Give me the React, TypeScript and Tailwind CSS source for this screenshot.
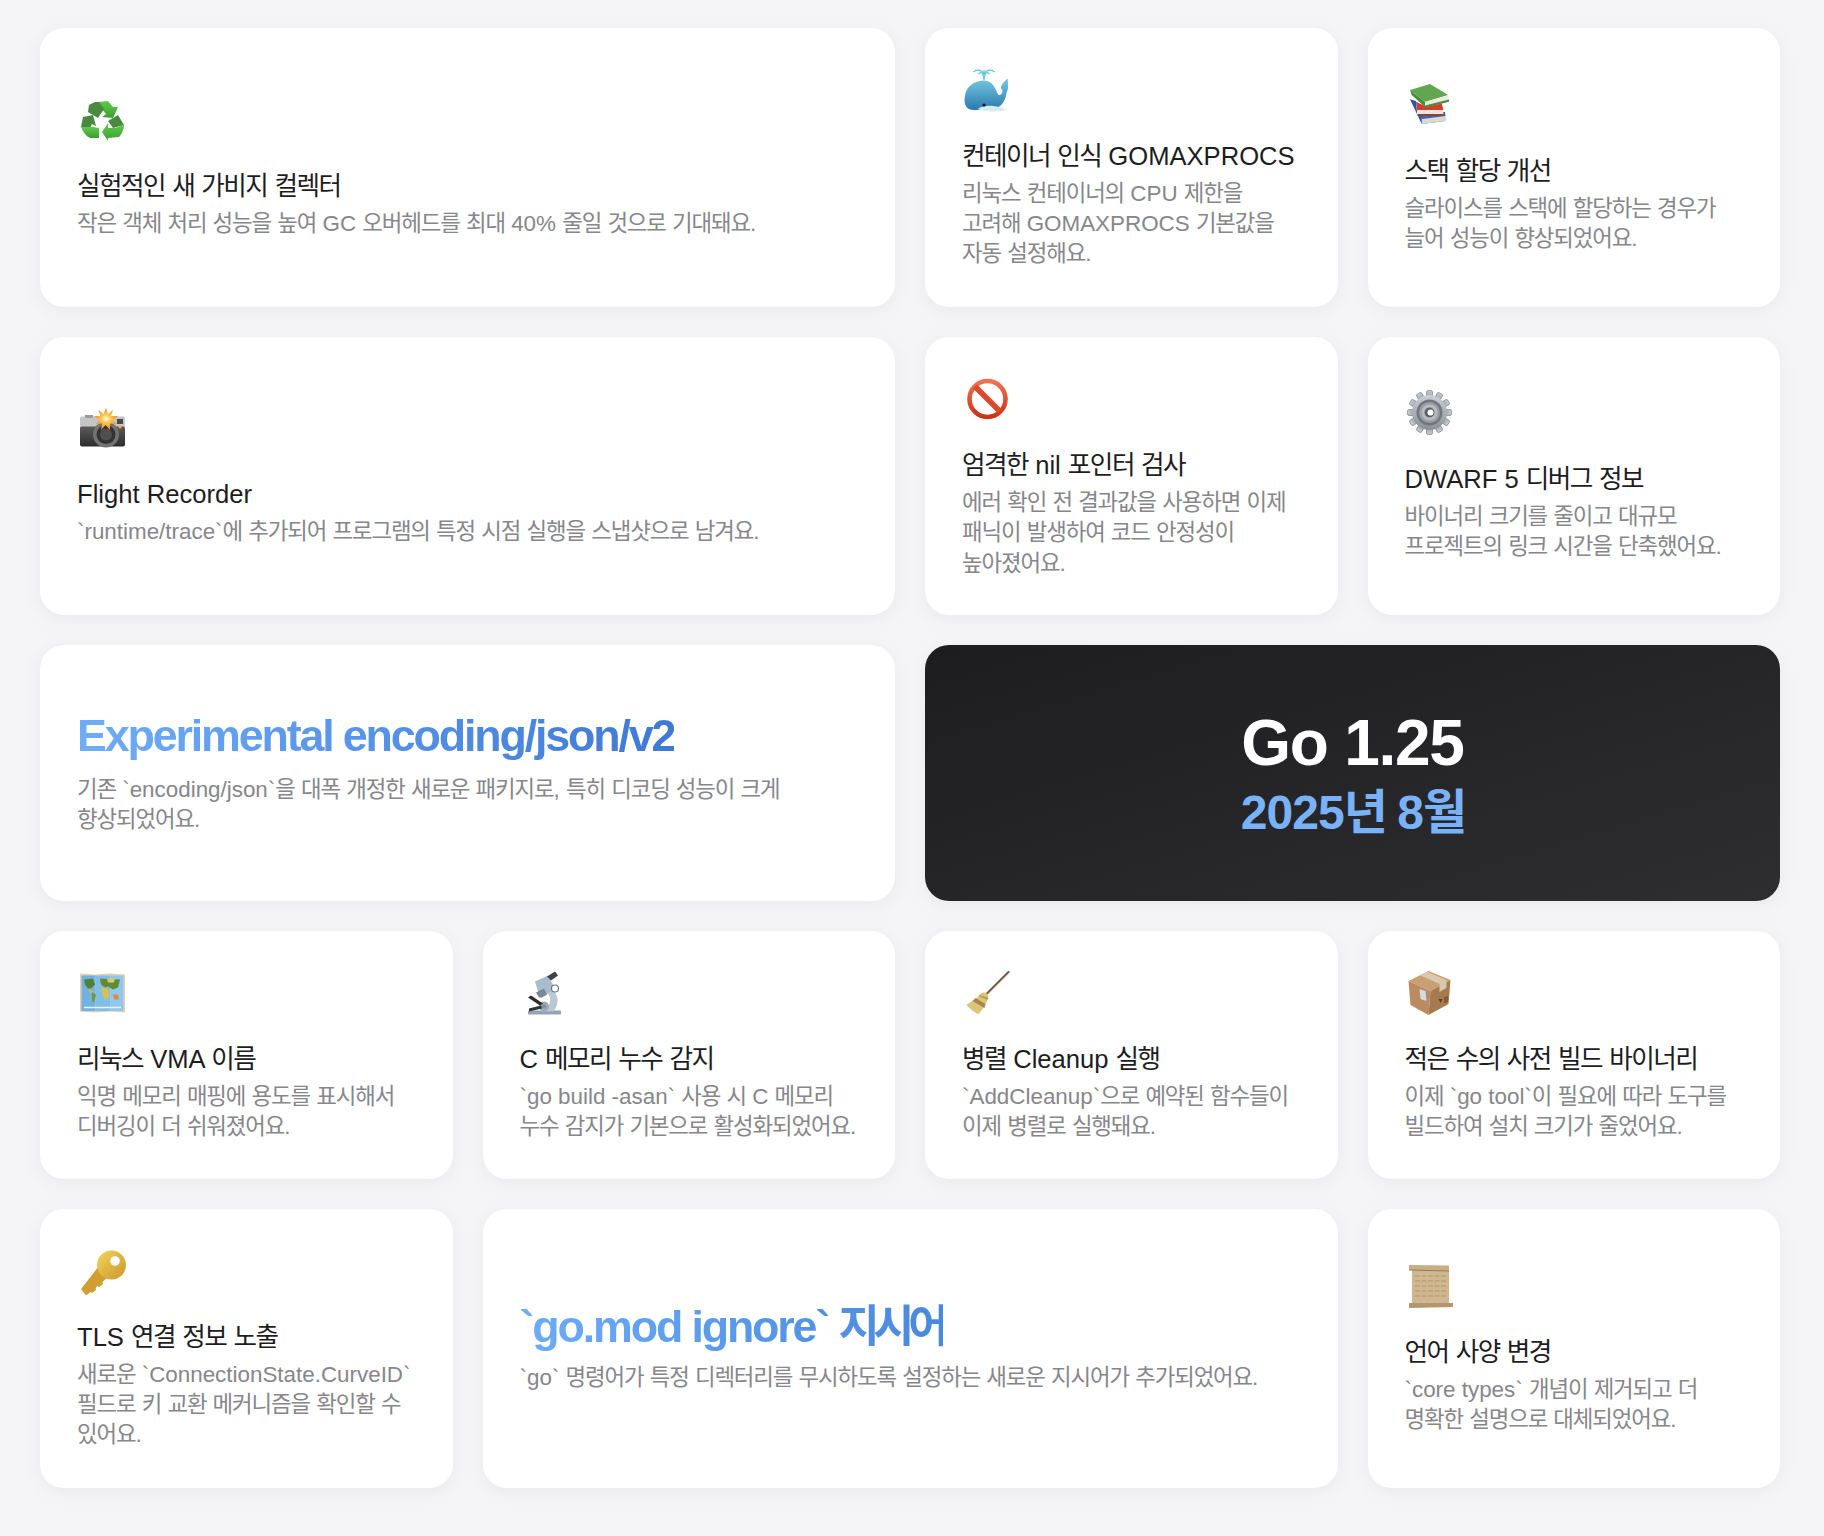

import React from "react";

const Svg = ({ children }: { children: React.ReactNode }) => (
  <svg viewBox="0 0 46 46" className="w-[46px] h-[46px] overflow-visible">{children}</svg>
);

const Recycle = () => (
  <Svg>
    <defs>
      <linearGradient id="rg" x1="0" y1="0" x2="0" y2="1"><stop offset="0" stopColor="#66c94c"/><stop offset="1" stopColor="#36a12f"/></linearGradient>
    </defs>
    <g transform="translate(4 5)">
      <path d="M16 1 L27 0 L32 6 L37 6 L32 17 L21 16 L25 13 L20 7 Z" fill="url(#rg)"/>
      <path d="M8 4 L14 1 L18 1 L23 8 L17 17 L7 11 Z" fill="#4a8a3e"/>
      <path d="M2 16 L12 14 L15 25 L11 23 L9 27 L0 26 Z" fill="#4a8a3e"/>
      <path d="M0 26 L12 26 L18 27 L18 37 L9 37 C5 35 2 31 0 26Z" fill="url(#rg)"/>
      <path d="M27 20 L37 14 L43 24 L32 27 Z" fill="#4a8a3e"/>
      <path d="M43 24 C43 29 40 34 38 36 L27 37 L27 40 L21 31 L27 22 L27 27 L34 27 Z" fill="url(#rg)"/>
    </g>
  </Svg>
);

const Whale = () => (
  <Svg>
    <defs>
      <linearGradient id="wg" x1="0" y1="0" x2="0" y2="1"><stop offset="0" stopColor="#74c9df"/><stop offset="1" stopColor="#2b79ae"/></linearGradient>
    </defs>
    <g transform="translate(2.5 2)">
      <path d="M0 32 C0 19 9 12.5 20 12.5 C28 12.5 31 21 34 27 C37 27 38 25 38 22 C35 20 36 17 43 10.5 C44 17 44 21 42 25 C41 33 37 39 28 42 L9 42 C3 42 0 38 0 32Z" fill="url(#wg)"/>
      <path d="M13 41 C21 36 31 37 43 42 C33 44 19 44 13 41Z" fill="#d6ecf2"/>
      <circle cx="19.5" cy="37" r="1.6" fill="#111"/>
      <path d="M14 6 C17 3 19 5 19.5 12 C20 5 22 3 25 6 M9 4 C12 1 17 2 19 5 M30 4 C27 1 22 2 20 5 M19.5 10 V2" stroke="#63cbe0" strokeWidth="1.3" fill="none"/>
    </g>
  </Svg>
);

const Books = () => (
  <Svg>
    <path d="M5 18.3 L11 20 L12.3 34 L40 31 L40.3 40 L16.7 43Z" fill="#2f55a6"/>
    <path d="M16.7 36 L40.3 34 L40.3 40 L16.7 43Z" fill="#dcd9cf"/>
    <path d="M16.7 36 L40.3 33 L40.3 35 L16.7 38Z" fill="#3a5fae"/>
    <path d="M11 20.7 L20 25 L36.7 22 L38.3 29 L12.3 30Z" fill="#cf3f2a"/>
    <path d="M12.3 29 L38.3 29 L38.3 34 L12.3 34Z" fill="#e9e6dc"/>
    <path d="M12.3 33 L38.3 33 L38.3 34.5 L12.3 34.5Z" fill="#b23522"/>
    <path d="M5 9 L25 3 L43.3 14 L20 21Z" fill="#62a64f"/>
    <path d="M5 9 L20 21 L20 26 L6.7 14Z" fill="#4a8c3c"/>
    <path d="M20 21 L43.3 14 L44 20.7 L21 26Z" fill="#eceadf"/>
    <path d="M20 24.5 L44 18.5 L44 20.7 L21 26.5Z" fill="#4a8c3c"/>
  </Svg>
);

const Camera = () => (
  <Svg>
    <defs>
      <linearGradient id="cg" x1="0" y1="0" x2="0" y2="1"><stop offset="0" stopColor="#5c5c5c"/><stop offset="1" stopColor="#2c2c2c"/></linearGradient>
      <radialGradient id="fl"><stop offset="0" stopColor="#fffbe0"/><stop offset=".4" stopColor="#fcc54e"/><stop offset="1" stopColor="#ee8a20"/></radialGradient>
    </defs>
    <rect x="3" y="22" width="45" height="20.5" rx="2" fill="url(#cg)"/>
    <rect x="3" y="12.5" width="45" height="10" rx="1.5" fill="#c6c6c6"/>
    <rect x="8" y="11" width="8" height="3" fill="#9c9c9c"/>
    <circle cx="29" cy="30.5" r="13" fill="#737373"/>
    <circle cx="29" cy="30.5" r="9.5" fill="#333"/>
    <circle cx="29" cy="30.5" r="6" fill="#4f4f4f"/>
    <rect x="40" y="15" width="6" height="5" fill="#4a4a4a"/>
    <circle cx="43" cy="23" r="1.5" fill="#f5b030"/>
    <path d="M29 3.5 L31 10 L36 6 L34 12 L41 12 L35.5 16 L40 20 L33 19.5 L33 26 L28.5 21 L24 26 L25 19.5 L19 20 L22.5 16 L17 12 L23.5 12 L21.5 6 L26.5 10Z" fill="url(#fl)"/>
  </Svg>
);

const NoEntry = () => (
  <Svg>
    <defs>
      <linearGradient id="ng" x1="0" y1="0" x2="0" y2="1"><stop offset="0" stopColor="#ee7350"/><stop offset="1" stopColor="#c93416"/></linearGradient>
    </defs>
    <circle cx="25.5" cy="24" r="18" fill="#fff" stroke="url(#ng)" strokeWidth="4.6"/>
    <path d="M13 11.5 L38 36.5" stroke="#d9492a" strokeWidth="5.6"/>
  </Svg>
);

const Gear = () => {
  const teeth = Array.from({ length: 12 }, (_, i) => i * 30);
  return (
    <Svg>
      <defs>
        <linearGradient id="gg" x1="0" y1="0" x2="0" y2="1"><stop offset="0" stopColor="#c8cfd6"/><stop offset="1" stopColor="#8a9097"/></linearGradient>
      </defs>
      <g transform="translate(1.5 .5)">
        {teeth.map((a) => (
          <rect key={a} x="20" y="1" width="6" height="9" rx="1.5" fill="url(#gg)" stroke="#5f5f5f" strokeWidth=".5" transform={`rotate(${a} 23 23)`} />
        ))}
        <circle cx="23" cy="23" r="17.5" fill="url(#gg)"/>
        <circle cx="23" cy="23" r="13" fill="#73777c"/>
        <circle cx="23" cy="23" r="10.5" fill="#9a9fa5"/>
        <circle cx="23" cy="23" r="8" fill="#b8bdc3"/>
        <circle cx="23" cy="23" r="5" fill="#5c6166"/>
        <circle cx="24" cy="23" r="3" fill="#fff"/>
      </g>
    </Svg>
  );
};

const MapIcon = () => (
  <Svg>
    <g transform="translate(3 4.5)">
      <path d="M0 0 L15 1 L30 0 L45 1 L45 39 L30 38 L15 39 L0 38Z" fill="#ecccae"/>
      <rect x="1.5" y="2" width="14" height="35.5" fill="#6fb3e2"/>
      <rect x="15.5" y="2" width="15" height="35.5" fill="#81bfe9"/>
      <rect x="30.5" y="2" width="13" height="35.5" fill="#8fc8ee"/>
      <path d="M4 6 L13 5 L15 11 L11 15 L8 15 L5 11Z" fill="#4f8234"/>
      <path d="M9 15 L12 17 L14 18 L10 20Z" fill="#d3bb40"/>
      <path d="M12 19 L16 21 L14 29 L12 27Z" fill="#6f9a38"/>
      <path d="M20 5 L40 6 L38 14 L33 16 L28 13 L25 14 L21 11Z" fill="#5f8c34"/>
      <path d="M27 5 L35 5 L34 9 L28 9Z" fill="#d5cf6a"/>
      <path d="M21 14 L28 15 L29 23 L25 27 L23 22Z" fill="#d8c24a"/>
      <path d="M33 21 L38 21 L39 26 L34 26Z" fill="#e08a36"/>
      <path d="M4 34 L41 34" stroke="#e8f4fa" strokeWidth="1.5"/>
    </g>
  </Svg>
);

const Microscope = () => (
  <Svg>
    <g transform="translate(3 1.5)">
      <rect x="5" y="40" width="33" height="4" rx="1" fill="#8fa4b3"/>
      <path d="M27 18 C36 22 37 34 30 41 L18 41 C26 38 30 30 25 23Z" fill="#bcc8d1" />
      <circle cx="21" cy="36" r="5" fill="#9aaab6"/>
      <circle cx="21" cy="36" r="2" fill="#7f8f9a"/>
      <path d="M5 27 L8 25 L20 33 L17 35Z" fill="#2c2c2c"/>
      <path d="M6 38 L18 35 L19 38 L6 41Z" fill="#333"/>
      <path d="M12 11 L25 5 L32 18 L22 25 L16 24Z" fill="#a8bccb"/>
      <path d="M13 22 L21 18 L24 24 L19 27 L16 27Z" fill="#778896"/>
      <path d="M24 6 L32 1 L35 5 L28 10Z" fill="#3e4247"/>
      <circle cx="32" cy="18" r="3.5" fill="#fff" stroke="#6b7880" strokeWidth="1.2"/>
    </g>
  </Svg>
);

const Broom = () => (
  <Svg>
    <g transform="translate(3.5 1)">
      <path d="M21 24 L43 2" stroke="#7a5a40" strokeWidth="2.2" strokeLinecap="round"/>
      <path d="M15 24 C19 21 22 23 23 26 C22 33 17 40 13 44 C9 43 4 38 1 35 C5 31 11 30 15 24Z" fill="#dcc478"/>
      <path d="M7 31 L19 38 L20 34 L10 28Z" fill="#a8874f"/>
      <path d="M14 25 L23 28 L22 30 L13 26Z" fill="#b89a54"/>
    </g>
  </Svg>
);

const Box = () => (
  <Svg>
    <g transform="translate(1.5 1)">
      <path d="M2 11 L22 1 L44 10 L24 21Z" fill="#c89f72"/>
      <path d="M2 11 L24 21 L22 45 L4 35Z" fill="#b98b5e"/>
      <path d="M24 21 L44 10 L42 34 L22 45Z" fill="#a57a4e"/>
      <path d="M13 5 L33 14 L33 22 L40 18 L40 10 L21 2Z" fill="#d9c7ae"/>
      <path d="M13 19 L19 21 L20 31 L14 29Z" fill="#cfdde6"/>
      <path d="M32 29 L36 29 L34 33Z M38 27 L39 27 L39 33 L38 33Z M40 26 L41 26 L41 32 L40 32Z" fill="#5a3f27"/>
    </g>
  </Svg>
);

const KeyIcon = () => (
  <Svg>
    <defs>
      <linearGradient id="kg" x1="0" y1="0" x2="1" y2="1"><stop offset="0" stopColor="#f6d45a"/><stop offset="1" stopColor="#c9962c"/></linearGradient>
    </defs>
    <path d="M22 19 L31 30 L25.5 35 L26 37 L22 40 L20.5 39 L18.5 41 L19 43 L15 46 L13.5 45 L9 48.5 L4 42 Z" fill="#cf9f34"/>
    <circle cx="34.5" cy="18" r="14.5" fill="url(#kg)"/>
    <circle cx="38" cy="14" r="4.8" fill="#fff"/>
  </Svg>
);

const Scroll = () => (
  <Svg>
    <rect x="7" y="6" width="37" height="35" fill="#cfb78f"/>
    <path d="M4 3 L44 3.5 L44 9 L4 8Z" fill="#c9ad83"/>
    <path d="M4 8 L44 9" stroke="#9a7e56" strokeWidth="1"/>
    <path d="M4 41 L48 41 L48 45 L4 46Z" fill="#b3966c"/>
    <path d="M10 14 H41 M10 19 H41 M10 24 H41 M10 29 H41 M10 34 H41" stroke="#bda27a" strokeWidth="1.3" strokeDasharray="5 1.5"/>
  </Svg>
);

function H({ s, k }: { s: string; k: string }) {
  return (
    <>
      {s.split(/([\uAC00-\uD7A3]+)/).map((p, i) =>
        i % 2 ? <span key={i} className={k}>{p}</span> : <React.Fragment key={i}>{p}</React.Fragment>
      )}
    </>
  );
}

const descK = "tracking-[-0.05em]";
const titleK = "tracking-[-0.06em]";
const desc = "text-[22.4px] leading-[1.35] text-[#86868b] break-keep";
const title = "text-[25.6px] leading-[1.4] text-[#1d1d1f] font-normal mb-[4px]";
const card = "bg-white rounded-[24px] px-[37px] flex flex-col justify-center shadow-[0_4px_20px_rgba(0,0,0,0.05)]";

function Item({ icon, t, d, cls = "" }: { icon: React.ReactNode; t: string; d: string; cls?: string }) {
  return (
    <div className={`${card} ${cls}`}>
      <div className="h-[46px] mb-[27px]">{icon}</div>
      <h3 className={title}><H s={t} k={titleK} /></h3>
      <p className={desc}><H s={d} k={descK} /></p>
    </div>
  );
}

export default function App() {
  return (
    <div
      className="min-h-[1536px] bg-[#f5f5f7] pl-[40px] pr-[44px] pt-[28px] pb-[49px]"
      style={{ fontFamily: '"Liberation Sans", "Noto Sans CJK KR", sans-serif' }}
    >
      <div className="grid grid-cols-4 gap-[30px] grid-rows-[279px_278px_256px_248px_279px]">
        <Item cls="col-span-2" icon={<Recycle />} t="실험적인 새 가비지 컬렉터" d="작은 객체 처리 성능을 높여 GC 오버헤드를 최대 40% 줄일 것으로 기대돼요." />
        <Item icon={<Whale />} t="컨테이너 인식 GOMAXPROCS" d="리눅스 컨테이너의 CPU 제한을 고려해 GOMAXPROCS 기본값을 자동 설정해요." />
        <Item icon={<Books />} t="스택 할당 개선" d="슬라이스를 스택에 할당하는 경우가 늘어 성능이 향상되었어요." />

        <Item cls="col-span-2" icon={<Camera />} t="Flight Recorder" d="`runtime/trace`에 추가되어 프로그램의 특정 시점 실행을 스냅샷으로 남겨요." />
        <Item cls="pt-[2px]" icon={<NoEntry />} t="엄격한 nil 포인터 검사" d="에러 확인 전 결과값을 사용하면 이제 패닉이 발생하여 코드 안정성이 높아졌어요." />
        <Item icon={<Gear />} t="DWARF 5 디버그 정보" d="바이너리 크기를 줄이고 대규모 프로젝트의 링크 시간을 단축했어요." />

        <div className={`${card} col-span-2 pb-[7px]`}>
          <h2 className="text-[44.8px] leading-[1.4] font-bold tracking-[-0.048em] mb-[8px] bg-gradient-to-r from-[#6fadf8] to-[#3f78d6] bg-clip-text text-transparent w-fit">Experimental encoding/json/v2</h2>
          <p className={desc}><H s="기존 `encoding/json`을 대폭 개정한 새로운 패키지로, 특히 디코딩 성능이 크게 향상되었어요." k={descK} /></p>
        </div>
        <div className="col-span-2 rounded-[24px] bg-gradient-to-br from-[#1d1d1f] to-[#2e2e30] flex flex-col items-center justify-center shadow-[0_4px_20px_rgba(0,0,0,0.05)]">
          <div className="text-[64px] leading-[1.2] font-bold text-white tracking-[-0.02em]">Go 1.25</div>
          <div className="text-[48px] leading-[1.2] font-bold text-[#7ab2fa] tracking-[-0.02em] mt-[2px]"><H s="2025년 8월" k="tracking-[-0.06em]" /></div>
        </div>

        <Item cls="pt-[2px]" icon={<MapIcon />} t="리눅스 VMA 이름" d="익명 메모리 매핑에 용도를 표시해서 디버깅이 더 쉬워졌어요." />
        <Item cls="pt-[2px]" icon={<Microscope />} t="C 메모리 누수 감지" d="`go build -asan` 사용 시 C 메모리 누수 감지가 기본으로 활성화되었어요." />
        <Item cls="pt-[2px]" icon={<Broom />} t="병렬 Cleanup 실행" d="`AddCleanup`으로 예약된 함수들이 이제 병렬로 실행돼요." />
        <Item cls="pt-[2px]" icon={<Box />} t="적은 수의 사전 빌드 바이너리" d="이제 `go tool`이 필요에 따라 도구를 빌드하여 설치 크기가 줄었어요." />

        <Item icon={<KeyIcon />} t="TLS 연결 정보 노출" d="새로운 `ConnectionState.CurveID` 필드로 키 교환 메커니즘을 확인할 수 있어요." />
        <div className={`${card} col-span-2 pb-[9px]`}>
          <h2 className="text-[44.8px] leading-[1.4] font-bold tracking-[-0.048em] mb-[5.5px] bg-gradient-to-r from-[#6cacf8] to-[#4a88dc] bg-clip-text text-transparent w-fit"><H s="`go.mod ignore` 지시어" k="tracking-[-0.145em]" /></h2>
          <p className={desc}><H s="`go` 명령어가 특정 디렉터리를 무시하도록 설정하는 새로운 지시어가 추가되었어요." k={descK} /></p>
        </div>
        <Item icon={<Scroll />} t="언어 사양 변경" d="`core types` 개념이 제거되고 더 명확한 설명으로 대체되었어요." />
      </div>
    </div>
  );
}
